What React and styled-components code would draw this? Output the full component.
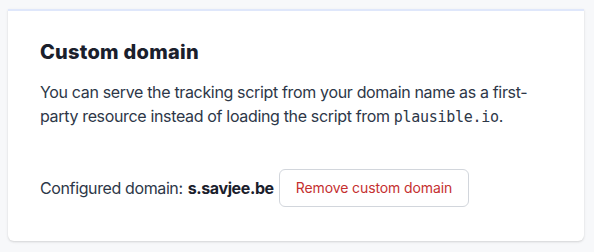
import React from "react"
import styled, { createGlobalStyle } from "styled-components"

const GlobalStyle = createGlobalStyle`
  html, body {
    margin: 0;
    background: #f7f8fa;
  }
  body {
    font-family: Inter, "Noto Sans", sans-serif;
    -webkit-font-smoothing: antialiased;
  }
`

const Page = styled.div`
  padding: 9px 10px 12px 8px;
`

const Card = styled.section`
  background: #ffffff;
  border-top: 2px solid #dfe7fb;
  border-radius: 0 0 6px 6px;
  box-shadow: 0 1px 3px rgba(0, 0, 0, 0.1), 0 1px 2px rgba(0, 0, 0, 0.06);
  padding: 27px 32px 34px;
  box-sizing: border-box;
`

const Title = styled.h2`
  margin: 0;
  font-size: 20px;
  line-height: 28px;
  font-weight: 800;
  letter-spacing: 0.25px;
  color: #1a202c;
`

const Text = styled.p`
  margin: 14px 0 0;
  font-size: 16px;
  line-height: 24px;
  letter-spacing: -0.34px;
  color: #2d3748;
`

const Code = styled.code`
  font-family: "DejaVu Sans Mono", "Liberation Mono", monospace;
  font-size: 15px;
  letter-spacing: -0.3px;
  color: #2d3748;
`

const Row = styled.div`
  display: flex;
  align-items: center;
  margin-top: 40px;
  font-size: 16px;
  line-height: 24px;
  letter-spacing: -0.38px;
  color: #2d3748;
`

const Domain = styled.b`
  font-weight: 700;
  color: #1a202c;
  margin-left: 5px;
  margin-right: 5px;
`

const Button = styled.button`
  height: 38px;
  padding: 0 16px;
  border: 1px solid #d2d6dc;
  border-radius: 6px;
  background: #ffffff;
  color: #c53030;
  font-family: inherit;
  font-size: 14px;
  line-height: 20px;
  letter-spacing: -0.1px;
  cursor: pointer;
`

export default function App() {
  return (
    <>
      <GlobalStyle />
      <Page>
        <Card>
          <Title>Custom domain</Title>
          <Text>
            You can serve the tracking script from your domain name as a
            first-party resource instead of loading the script from{" "}
            <Code>plausible.io</Code>.
          </Text>
          <Row>
            Configured domain:
            <Domain>s.savjee.be</Domain>
            <Button>Remove custom domain</Button>
          </Row>
        </Card>
      </Page>
    </>
  )
}
